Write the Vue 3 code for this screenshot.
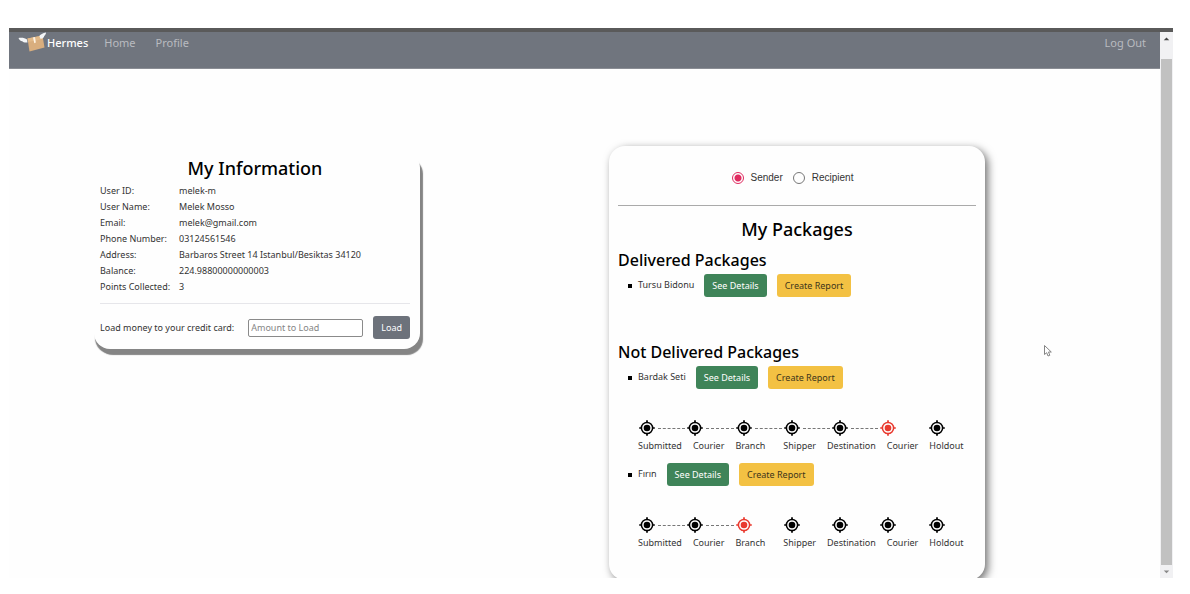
<script setup>
import { ref } from 'vue'

const role = ref('sender')
const amount = ref('')

const info = [
  ['User ID:', 'melek-m'],
  ['User Name:', 'Melek Mosso'],
  ['Email:', 'melek@gmail.com'],
  ['Phone Number:', '03124561546'],
  ['Address:', 'Barbaros Street 14 Istanbul/Besiktas 34120'],
  ['Balance:', '224.98800000000003'],
  ['Points Collected:', '3'],
]

const steps = ['Submitted', 'Courier', 'Branch', 'Shipper', 'Destination', 'Courier', 'Holdout']
const delivered = ['Tursu Bidonu']
const pending = [
  { name: 'Bardak Seti', current: 5 },
  { name: 'Fırın', current: 2 },
]
</script>

<template>
  <div class="screen">
    <div class="viewport">
      <div class="page">
        <nav class="navbar">
          <a href="#" class="brand">
            <svg class="logo" viewBox="0 0 28 20" aria-hidden="true">
              <path d="M9.500 6.500 24.500 3.500 26.500 15.500 11.500 19.500z" fill="#d9ae7e" />
              <path d="M9.500 6.500 24.500 3.500 25 7 10.200 10z" fill="#e2b988" />
              <path d="M15 5.500 17 5 17.800 10.500 16.300 11.200z" fill="#fff4e4" />
              <path d="M.5 6C4 5.500 7 6 9 7.500L9.500 10.500C7 10.800 5 10.300 4.300 9.300 2.500 9.100 1.200 8 .5 6z" fill="#f4f6f8" />
              <path d="M28 .5C25 1 22 2.500 21.300 4L22.500 6.800C25 6.500 26.200 5.500 26.200 4 27.500 3 28 1.800 28 .5z" fill="#f4f6f8" />
            </svg>
            <span>Hermes</span>
          </a>
          <a href="#" class="link">Home</a>
          <a href="#" class="link">Profile</a>
          <a href="#" class="link logout">Log Out</a>
        </nav>
        <main class="content">
          <section class="card info">
            <h1>My Information</h1>
            <table>
              <tbody>
                <tr v-for="row in info" :key="row[0]">
                  <th scope="row">{{ row[0] }}</th>
                  <td>{{ row[1] }}</td>
                </tr>
              </tbody>
            </table>
            <hr />
            <form class="load" @submit.prevent>
              <label for="amount">Load money to your credit card:</label>
              <input id="amount" v-model="amount" type="text" placeholder="Amount to Load" />
              <button class="btn gray" type="submit">Load</button>
            </form>
          </section>

          <section class="card packages">
            <div class="roles">
              <label><input v-model="role" type="radio" name="role" value="sender" />Sender</label>
              <label><input v-model="role" type="radio" name="role" value="recipient" />Recipient</label>
            </div>
            <hr />
            <h1>My Packages</h1>
            <h2>Delivered Packages</h2>
            <ul class="delivered">
              <li v-for="name in delivered" :key="name">
                <div class="item">
                  <span class="name">{{ name }}</span>
                  <button class="btn green" type="button">See Details</button>
                  <button class="btn yellow" type="button">Create Report</button>
                </div>
              </li>
            </ul>
            <h2>Not Delivered Packages</h2>
            <ul>
              <li v-for="item in pending" :key="item.name">
                <div class="item">
                  <span class="name">{{ item.name }}</span>
                  <button class="btn green" type="button">See Details</button>
                  <button class="btn yellow" type="button">Create Report</button>
                </div>
                <div class="track">
                  <div
                    v-for="(step, i) in steps"
                    :key="i"
                    class="stop"
                    :class="{ current: i === item.current, linked: i < item.current }"
                  >
                    <svg viewBox="0 0 16 16" aria-hidden="true">
                      <circle cx="8" cy="8" r="5.600" fill="none" stroke="currentColor" stroke-width="1.500" />
                      <circle cx="8" cy="8" r="3.300" fill="currentColor" />
                      <path d="M8 .2v2.500M8 13.300v2.500M.2 8h2.500M13.300 8h2.500" stroke="currentColor" stroke-width="1.700" />
                    </svg>
                  </div>
                </div>
                <div class="labels">
                  <span v-for="(step, i) in steps" :key="i">{{ step }}</span>
                </div>
              </li>
            </ul>
          </section>
        </main>
      </div>
      <div class="scrollbar" aria-hidden="true">
        <svg viewBox="0 0 12 14"><path d="M3 9 6 6 9 9z" fill="#444" /></svg>
        <div class="thumb"></div>
        <svg viewBox="0 0 12 14"><path d="M3 6 6 9 9 6z" fill="#888" /></svg>
      </div>
    </div>
    <svg class="cursor" viewBox="0 0 8 12" aria-hidden="true">
      <path d="M.5.500V9.500L2.700 7.700 4 11 5.800 10.300 4.500 7H7.300z" fill="#fff" stroke="#777" stroke-width=".9" />
    </svg>
  </div>
</template>

<style>
body {
  background: #fff;
}
</style>

<style scoped>
* {
  box-sizing: border-box;
}
.screen {
  height: 100vh;
  padding: 28px 17px 16px 9px;
  overflow: hidden;
  position: relative;
  font-family: "Noto Sans", "Open Sans", sans-serif;
  font-size: 9px;
  line-height: 16px;
  color: #333;
}
.viewport {
  height: 100%;
  display: flex;
  border-top: 4px solid #5a5a5a;
}
.page {
  flex: 1;
  min-width: 0;
  overflow: hidden;
  background: #fefefe;
}
.navbar {
  display: flex;
  align-items: flex-start;
  height: 37px;
  padding: 0 14px 0 9px;
  background: #70757e;
  border-bottom: 1px solid #8a8d94;
  font-size: 11px;
  line-height: 22px;
}
.navbar a {
  text-decoration: none;
}
.brand {
  display: flex;
  gap: 1px;
  color: #fff;
  font-weight: 500;
}
.logo {
  width: 28px;
  height: 20px;
}
.link {
  margin-left: 16px;
  color: #b9bbc0;
}
.link + .link {
  margin-left: 20px;
}
.link.logout {
  margin-left: auto;
}
.content {
  display: grid;
  grid-template-columns: minmax(0, 326fr) minmax(0, 376fr);
  column-gap: 189px;
  align-items: start;
  padding: 77px 175px 0 85px;
}
.card {
  background: #fefefe;
  border-radius: 16px;
}
h1,
h2 {
  margin: 0;
  color: #000;
  font-weight: 500;
}
h1 {
  font-size: 18px;
  line-height: 22px;
  text-align: center;
}
h2 {
  font-size: 16px;
  line-height: 20px;
}
.info {
  margin-top: 6px;
  padding: 5px 10px 10px 6px;
  box-shadow: 3px 6px 1px #858585, 1px 5px 1px #858585;
}
table {
  border-collapse: collapse;
  margin-top: 4px;
}
th,
td {
  padding: 0;
  font-weight: 400;
  text-align: left;
  white-space: nowrap;
}
th {
  width: 79px;
}
hr {
  margin: 0;
  border: 0;
  height: 1px;
  background: #aaa;
}
.info hr {
  margin: 8px 0 12px;
  background: #e6e6ea;
}
.load {
  display: flex;
  align-items: center;
  gap: 10px;
}
.load label {
  flex: 1;
  white-space: nowrap;
}
.load input {
  width: 115px;
  height: 18px;
  padding: 0 2px;
  border: 1px solid #8a8a8a;
  border-radius: 2px;
  background: #fff;
  font: inherit;
}
.load input::placeholder {
  color: #858585;
}
.btn {
  height: 23px;
  padding: 0 8px;
  border: 0;
  border-radius: 3px;
  font: inherit;
  white-space: nowrap;
}
.gray {
  background: #6d727b;
  color: #fff;
}
.green {
  background: #3f8459;
  color: #fff;
}
.yellow {
  background: #f3c143;
  color: #40351b;
}
.packages {
  padding: 20px 9px;
  box-shadow: 3px 3px 8px rgba(0, 0, 0, 0.55);
}
.roles {
  display: flex;
  justify-content: center;
  gap: 10px;
  height: 39px;
  padding: 4px 9px 0 0;
  font-family: "Liberation Sans", sans-serif;
  font-size: 10px;
}
.roles label {
  display: flex;
  align-items: center;
  gap: 7px;
  height: 16px;
}
.roles input {
  appearance: none;
  width: 12px;
  height: 12px;
  margin: 0;
  border: 1px solid #777;
  border-radius: 50%;
}
.roles input:checked {
  border: 1px solid #e02b60;
  background: radial-gradient(circle closest-side, #e02b60 3px, #fff 4px);
}
.packages h1 {
  margin: 12px 0 10px;
}
ul {
  margin: 0;
  padding-left: 20px;
  list-style: none;
}
.packages h2 + ul {
  margin-top: 4px;
}
.delivered {
  margin-bottom: 45px;
}
.item {
  display: flex;
  gap: 10px;
}
.item::before {
  content: "";
  align-self: center;
  width: 4px;
  height: 4px;
  margin: 0 -4px 0 -10px;
  background: #000;
}
.name {
  line-height: 22px;
}
.track {
  display: grid;
  grid-template-columns: repeat(7, 1fr);
  margin: 30px -1px 0 1px;
}
.stop {
  display: flex;
  align-items: center;
  gap: 3px;
  height: 18px;
  color: #000;
}
.stop svg {
  width: 16px;
  height: 16px;
  flex: none;
}
.stop.linked::after {
  content: "";
  flex: 1;
  margin-right: 2px;
  border-top: 1px dashed #777;
}
.stop.current {
  color: #e93a2f;
}
.labels {
  display: flex;
  gap: 11px;
  margin: 1px 0 9px;
}
.labels span:nth-child(4) {
  margin-left: 7px;
}
.scrollbar {
  display: flex;
  flex-direction: column;
  width: 13px;
  padding: 0 1px;
  background: #f1f1f3;
}
.scrollbar svg {
  width: 11px;
  height: 13px;
}
.thumb {
  flex: 1;
  margin-top: 14px;
  background: #c1c1c1;
}
.cursor {
  position: absolute;
  left: 1044px;
  top: 345px;
  width: 8px;
  height: 12px;
}
</style>
